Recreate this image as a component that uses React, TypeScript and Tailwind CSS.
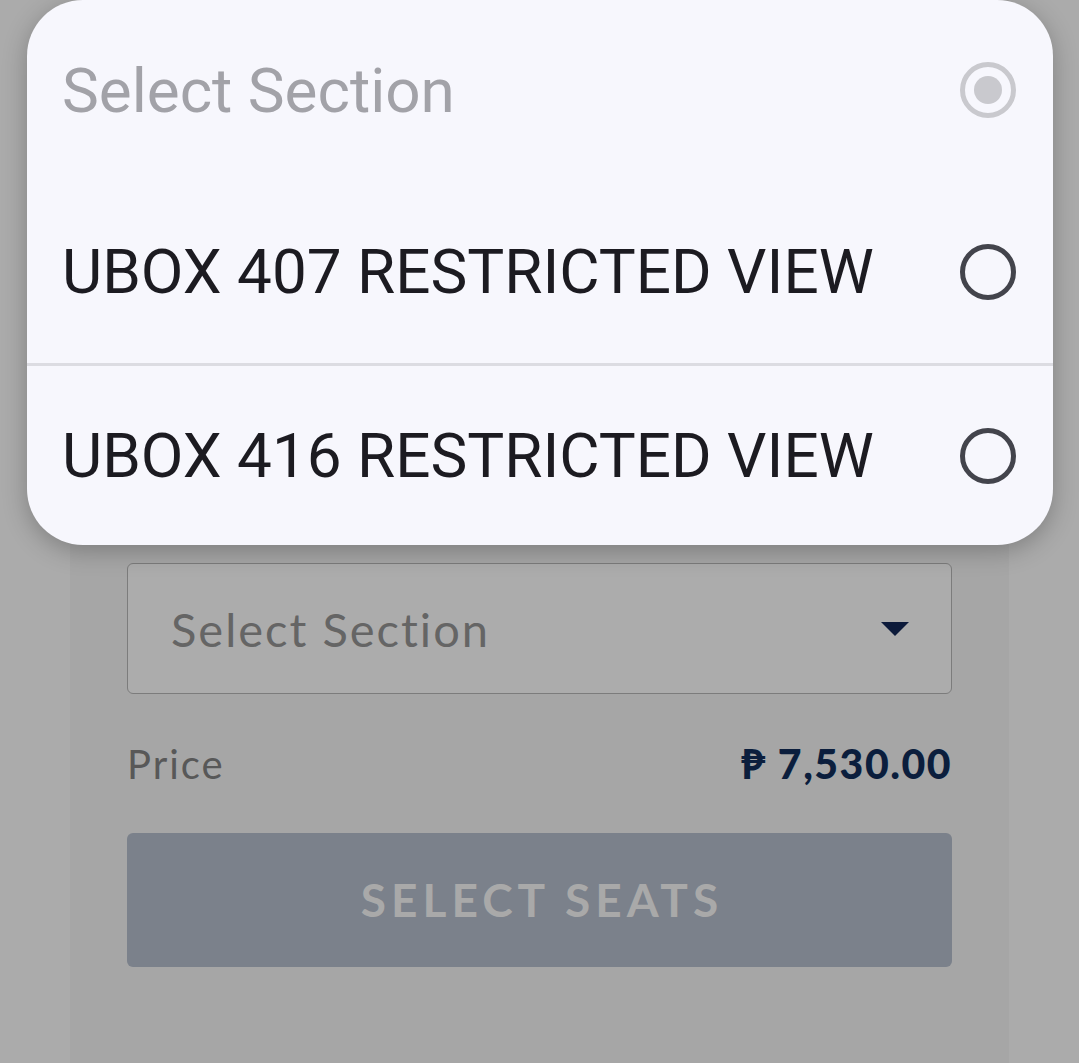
import React from "react";

function Radio({ checked, muted }: { checked?: boolean; muted?: boolean }) {
  const c = muted ? "#c9c9ce" : "#43444c";
  return (
    <svg width="58" height="58" viewBox="0 0 58 58" className="shrink-0">
      <circle cx="29" cy="29" r="25.5" fill="none" stroke={c} strokeWidth="5" />
      {checked && <circle cx="29" cy="29" r="14" fill={c} />}
    </svg>
  );
}

export default function App() {
  return (
    <div className="relative w-[1079px] h-[1063px] overflow-hidden bg-[#ababab]">
      {/* underlying page */}
      <div className="ml-[70px] w-[939px] h-[1063px] bg-[#a6a6a6] pt-[563px] px-[57px]">
        <div className="h-[131px] rounded-[6px] border-[1.5px] border-[#7c7c7c] bg-[#acacac] flex items-center justify-between pl-[43px] pr-[42px]">
          <span className="text-[47px] leading-[60px] text-[#656565] font-['Lato',sans-serif] tracking-[2px]">Select Section</span>
          <svg width="28" height="14" viewBox="0 0 28 14">
            <polygon points="0,0 28,0 14,14" fill="#0c1a3a" />
          </svg>
        </div>
        <div className="mt-[40px] h-[60px] flex items-center justify-between font-['Lato',sans-serif]">
          <span className="text-[40px] leading-[60px] tracking-[2px] text-[#585858]">Price</span>
          <span className="text-[41px] leading-[60px] font-black tracking-[1.5px] text-[#0b1e3d]">₱ 7,530.00</span>
        </div>
        <div className="mt-[39px] h-[134px] rounded-[6px] bg-[#7b818b] flex items-center justify-center">
          <span className="text-[46px] leading-[60px] font-bold tracking-[5px] pl-[5px] text-[#a9a9a9] font-['Lato',sans-serif]">SELECT SEATS</span>
        </div>
      </div>

      {/* dialog overlay */}
      <div className="absolute left-[27px] top-0 w-[1026px] h-[545px] rounded-[56px] bg-[#f7f7fd] shadow-[0_6px_24px_rgba(0,0,0,0.25)] overflow-hidden font-['Roboto',sans-serif]">
        <div className="h-[180px] flex items-center justify-between pl-[35px] pr-[36px]">
          <span className="text-[62px] text-[#a2a2a8]">Select Section</span>
          <Radio checked muted />
        </div>
        <div className="h-[183px] flex items-center justify-between pl-[35px] pr-[36px]">
          <span className="text-[62px] text-[#1c1b21]">UBOX 407 RESTRICTED VIEW</span>
          <Radio />
        </div>
        <div className="h-[3px] bg-[#dcdce2]" />
        <div className="h-[179px] flex items-center justify-between pl-[35px] pr-[36px]">
          <span className="text-[62px] text-[#1c1b21]">UBOX 416 RESTRICTED VIEW</span>
          <Radio />
        </div>
      </div>
    </div>
  );
}
